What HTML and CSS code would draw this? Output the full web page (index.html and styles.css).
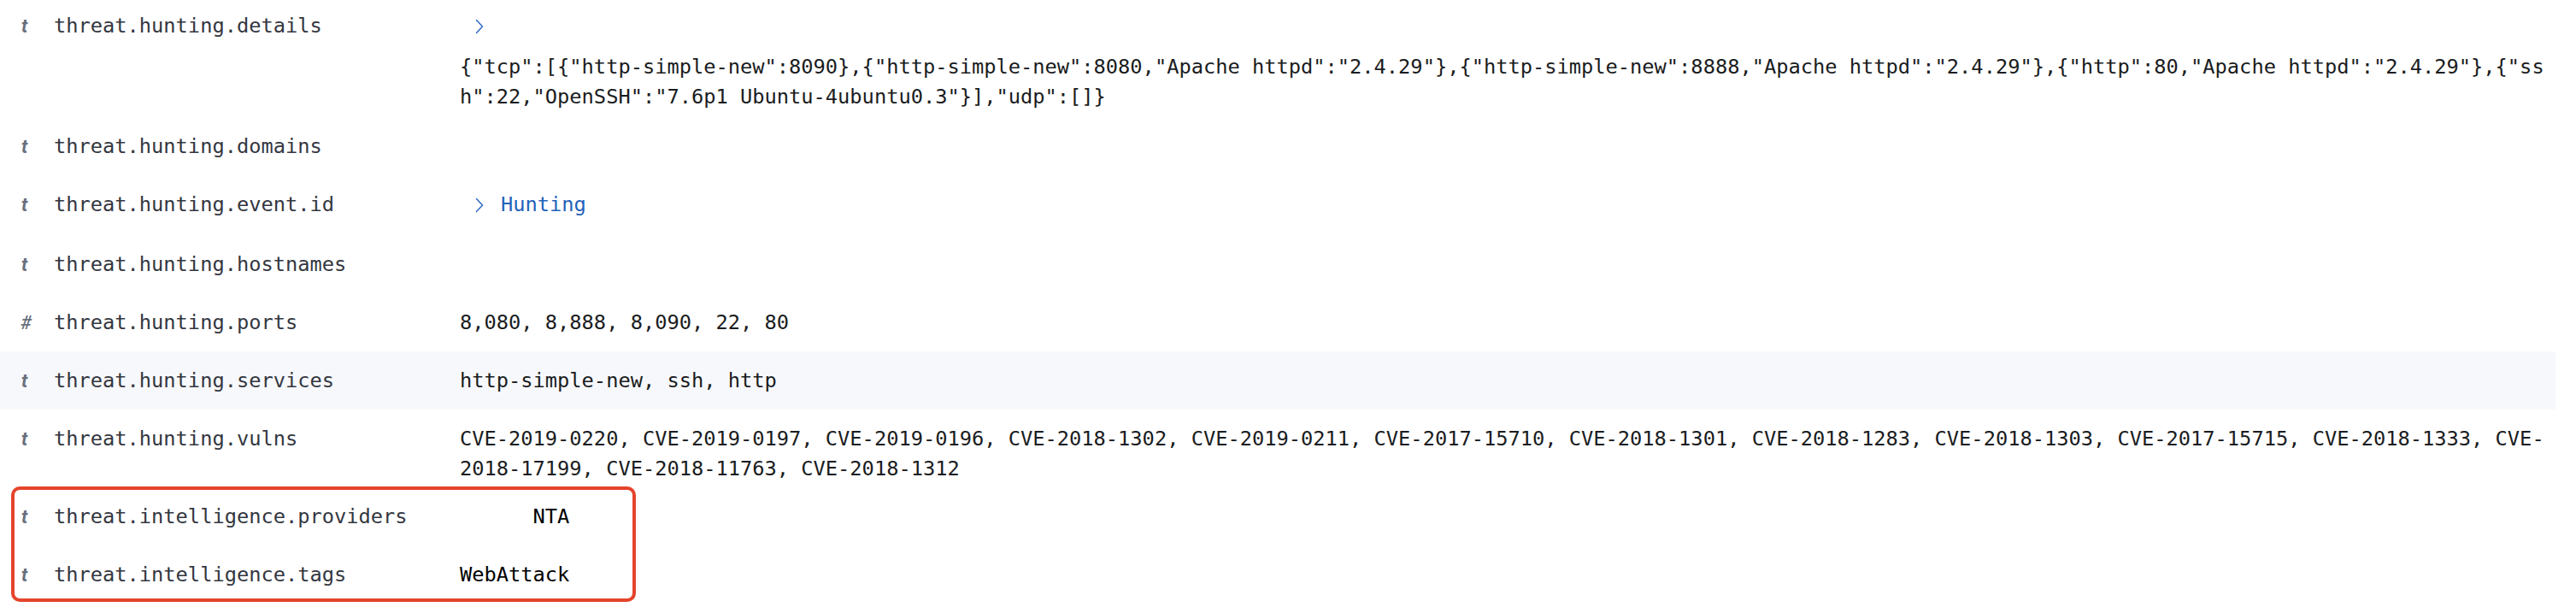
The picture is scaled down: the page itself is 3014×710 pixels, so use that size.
FILE: index.html
```html
<!DOCTYPE html>
<html lang="en">
<head>
<meta charset="utf-8">
<title>Document fields</title>
<link rel="stylesheet" href="styles.css">
</head>
<body>
<div class="doc-table">
  <div class="row row-details">
    <div class="type">t</div>
    <div class="name">threat.hunting.details</div>
    <div class="value">
      <div class="toggle-line">
        <span class="chevron"><svg width="10" height="18" viewBox="0 0 10 18"><polyline points="1.5,1.5 8.5,9 1.5,16.5" fill="none" stroke="#2565c7" stroke-width="1.4" stroke-linecap="round" stroke-linejoin="round"/></svg></span>
      </div>
      <div class="json">{"tcp":[{"http-simple-new":8090},{"http-simple-new":8080,"Apache httpd":"2.4.29"},{"http-simple-new":8888,"Apache httpd":"2.4.29"},{"http":80,"Apache httpd":"2.4.29"},{"ssh":22,"OpenSSH":"7.6p1 Ubuntu-4ubuntu0.3"}],"udp":[]}</div>
    </div>
  </div>

  <div class="row">
    <div class="type">t</div>
    <div class="name">threat.hunting.domains</div>
    <div class="value"></div>
  </div>

  <div class="row">
    <div class="type">t</div>
    <div class="name">threat.hunting.event.id</div>
    <div class="value">
      <span class="link-line">
        <span class="chevron"><svg width="10" height="18" viewBox="0 0 10 18"><polyline points="1.5,1.5 8.5,9 1.5,16.5" fill="none" stroke="#2565c7" stroke-width="1.4" stroke-linecap="round" stroke-linejoin="round"/></svg></span>
        <span class="link">Hunting</span>
      </span>
    </div>
  </div>

  <div class="row">
    <div class="type">t</div>
    <div class="name">threat.hunting.hostnames</div>
    <div class="value"></div>
  </div>

  <div class="row">
    <div class="type type-num">#</div>
    <div class="name">threat.hunting.ports</div>
    <div class="value">8,080, 8,888, 8,090, 22, 80</div>
  </div>

  <div class="row row-shaded">
    <div class="type">t</div>
    <div class="name">threat.hunting.services</div>
    <div class="value">http-simple-new, ssh, http</div>
  </div>

  <div class="row row-multi">
    <div class="type">t</div>
    <div class="name">threat.hunting.vulns</div>
    <div class="value">CVE-2019-0220, CVE-2019-0197, CVE-2019-0196, CVE-2018-1302, CVE-2019-0211, CVE-2017-15710, CVE-2018-1301, CVE-2018-1283, CVE-2018-1303, CVE-2017-15715, CVE-2018-1333, CVE-2018-17199, CVE-2018-11763, CVE-2018-1312</div>
  </div>

  <div class="highlight">
    <div class="row">
      <div class="type">t</div>
      <div class="name">threat.intelligence.providers</div>
      <div class="value"><span class="strong-val">NTA</span></div>
    </div>
    <div class="row">
      <div class="type">t</div>
      <div class="name">threat.intelligence.tags</div>
      <div class="value"><span class="strong-val">WebAttack</span></div>
    </div>
  </div>
</div>
</body>
</html>
```

FILE: styles.css
```css
html, body {
  margin: 0;
  padding: 0;
  background: #ffffff;
}

.doc-table {
  width: 2990px;
  font-family: "DejaVu Sans Mono", "Liberation Mono", monospace;
  font-size: 23.7px;
  line-height: 35px;
}

.row {
  display: grid;
  grid-template-columns: 63px 475px 2452px;
  align-items: start;
  padding: 16.5px 0;
}

.row-details {
  padding: 13px 0 6.5px;
}

.row-multi {
  padding: 16.5px 0 5px;
}

.row-shaded {
  background: #f7f8fb;
}

.type {
  padding-left: 25px;
  font-family: "Roboto", "Liberation Sans", sans-serif;
  font-style: italic;
  font-weight: 700;
  font-size: 22px;
  color: #69707d;
}

.type-num {
  padding-left: 24px;
  font-weight: 500;
}

.name {
  color: #343741;
  white-space: nowrap;
}

.value {
  color: #1a1c21;
  padding-right: 5px;
  word-break: break-all;
}

.toggle-line {
  height: 35px;
  display: flex;
  align-items: center;
}

.chevron {
  display: inline-flex;
  margin-left: 18px;
}

.json {
  margin-top: 13px;
}

.link-line {
  display: inline-flex;
  align-items: center;
}

.link {
  margin-left: 20px;
  color: #2362ba;
}

.highlight {
  position: relative;
}

.highlight::after {
  content: "";
  position: absolute;
  left: 13px;
  top: -1.5px;
  width: 731px;
  height: 135px;
  box-sizing: border-box;
  border: 4px solid #e5442c;
  border-radius: 10px;
  pointer-events: none;
}

.strong-val {
  display: inline-block;
  width: 9ch;
  text-align: right;
  color: #000000;
}
```
